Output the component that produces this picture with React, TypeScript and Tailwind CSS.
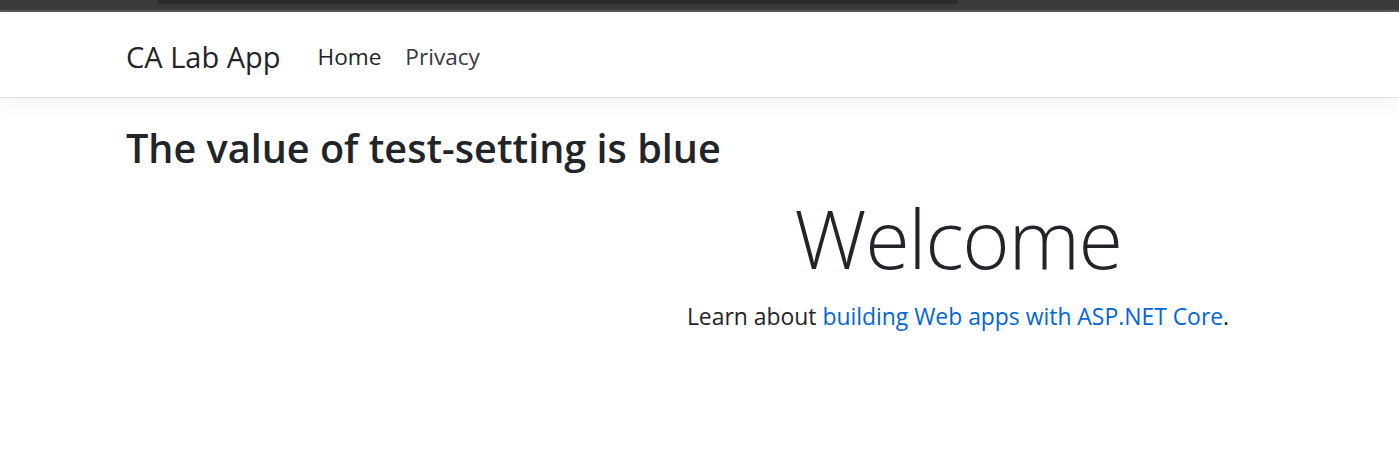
export default function App() {
  return (
    <div
      className="h-[472px] w-full overflow-hidden bg-white text-[#212529]"
      style={{ fontFamily: '"Open Sans", "Noto Sans", sans-serif' }}
    >
      {/* Browser chrome strip */}
      <div className="h-[10px] bg-[#3b3b3b]">
        <div className="ml-[157px] h-[4px] w-[801px] rounded-b-[6px] bg-[#2b2b2b]" />
      </div>
      <div className="h-[2px] bg-[#5a5a5a]" />

      {/* Navbar */}
      <nav className="flex h-[86px] items-center border-b border-[#dee2e6] bg-white px-[126px] pt-[4px] shadow-[0_6px_18px_rgba(0,0,0,0.05)]">
        <a className="mr-[25px] text-[29px] text-[#212529]">CA Lab App</a>
        <a className="px-[12px] text-[22.6px] text-[#212529]">Home</a>
        <a className="px-[12px] text-[22.6px] text-[#343a40]">Privacy</a>
      </nav>

      {/* Page body */}
      <main className="overflow-hidden pl-[126px] pt-[27px]">
        <h3 className="text-[39.6px] font-semibold leading-[1.2]">
          The value of test-setting is blue
        </h3>
        <div className="w-[1664px] pt-[16px] text-center">
          <h1 className="text-[81px] font-light leading-[1.2] tracking-[-1.4px]">
            Welcome
          </h1>
          <p className="mt-[14px] text-[22.9px] leading-[1.5]">
            Learn about{' '}
            <a className="text-[#0366d6]">building Web apps with ASP.NET Core</a>.
          </p>
        </div>
      </main>
    </div>
  );
}
